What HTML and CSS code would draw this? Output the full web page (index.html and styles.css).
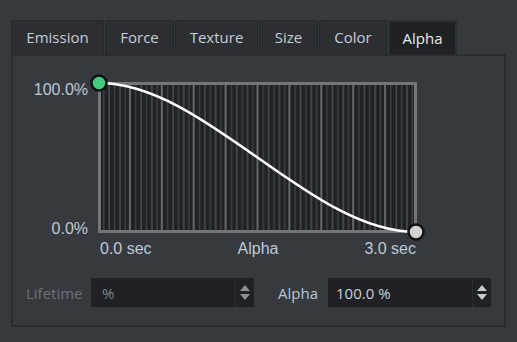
FILE: index.html
```html
<!DOCTYPE html>
<html lang="en">
<head>
    <meta charset="UTF-8">
    <title>Particle Alpha</title>
    <link rel="stylesheet" href="styles.css">
</head>
<body>
    <div class="editor">
        <!-- Abas -->
        <div class="tabs">
            <div class="tab tab-emission">Emission</div>
            <div class="tab tab-force">Force</div>
            <div class="tab tab-texture">Texture</div>
            <div class="tab tab-size">Size</div>
            <div class="tab tab-color">Color</div>
            <div class="tab tab-alpha ativa">Alpha</div>
        </div>

        <div class="panel">
            <!-- Grafico da curva -->
            <div class="chart-row">
                <div class="y-labels">
                    <span>100.0%</span>
                    <span>0.0%</span>
                </div>
                <svg class="plot" width="319" height="151" viewBox="0 0 319 151">
                    <defs>
                        <pattern id="minor" x="0" y="0" width="31.9" height="151" patternUnits="userSpaceOnUse">
                            <rect x="5" y="0" width="1.5" height="151" fill="#3d4044"/>
                            <rect x="10.5" y="0" width="1.5" height="151" fill="#4b4e52"/>
                            <rect x="15.8" y="0" width="1.5" height="151" fill="#3d4044"/>
                            <rect x="21.2" y="0" width="1.5" height="151" fill="#4b4e52"/>
                            <rect x="26.5" y="0" width="1.5" height="151" fill="#3d4044"/>
                        </pattern>
                        <pattern id="major" x="-1" y="0" width="31.9" height="151" patternUnits="userSpaceOnUse">
                            <rect x="0" y="0" width="2" height="151" fill="#65686b"/>
                        </pattern>
                    </defs>
                    <rect x="0" y="0" width="319" height="151" fill="#1f2124"/>
                    <rect x="0" y="0" width="319" height="151" fill="url(#minor)"/>
                    <rect x="0" y="0" width="319" height="151" fill="url(#major)"/>
                    <rect x="1.5" y="1.5" width="316" height="148" fill="none" stroke="#737578" stroke-width="3"/>
                    <path d="M1,1 C107,1 212,150 318,150" fill="none" stroke="#ffffff" stroke-width="2.5"/>
                    <circle cx="1" cy="1" r="7.5" fill="#3ecb7c" stroke="#111213" stroke-width="2.5"/>
                    <circle cx="318" cy="150" r="7.5" fill="#d3d3d3" stroke="#111213" stroke-width="2.5"/>
                </svg>
            </div>
            <div class="x-labels">
                <span>0.0 sec</span>
                <span>Alpha</span>
                <span>3.0 sec</span>
            </div>

            <!-- Campos -->
            <div class="fields">
                <div class="field">
                    <label class="field-label label-lifetime desativado">Lifetime</label>
                    <div class="spinbox desativado">
                        <span class="spin-value">%</span>
                        <span class="spin-arrows">
                            <span class="seta-cima"></span>
                            <span class="seta-baixo"></span>
                        </span>
                    </div>
                </div>
                <div class="field">
                    <label class="field-label label-alpha">Alpha</label>
                    <div class="spinbox">
                        <span class="spin-value">100.0 %</span>
                        <span class="spin-arrows">
                            <span class="seta-cima"></span>
                            <span class="seta-baixo"></span>
                        </span>
                    </div>
                </div>
            </div>
        </div>
    </div>
</body>
</html>
```

FILE: styles.css
```css
body {
    margin: 0;
    background-color: #36393e;
    font-family: "Open Sans", sans-serif;
    color: #c6cfd9;
}

.editor {
    padding: 20px 0 0 11px;
}

/* Abas */
.tabs {
    display: flex;
    height: 34px;
}

.tab {
    box-sizing: border-box;
    height: 34px;
    display: flex;
    align-items: center;
    justify-content: center;
    padding-bottom: 1px;
    background-color: #2c2e32;
    border: 1px solid #25272a;
    border-bottom: none;
    border-radius: 2px 2px 0 0;
    font-size: 15px;
    margin-right: 1px;
}

.tab-emission { width: 93px; }
.tab-force { width: 69px; }
.tab-texture { width: 83px; }
.tab-size { width: 59px; }
.tab-color { width: 68px; }
.tab-alpha { width: 69px; }

.tab.ativa {
    background-color: #1f2125;
    border: 2px solid #2b2e32;
    border-bottom: none;
    color: #e4eaf1;
}

.panel {
    box-sizing: border-box;
    width: 495px;
    height: 273px;
    border: 2px solid #2a2c30;
    padding-top: 26px;
}

/* Grafico */
.chart-row {
    display: flex;
}

.y-labels {
    width: 85px;
    box-sizing: border-box;
    padding-right: 10px;
    display: flex;
    flex-direction: column;
    justify-content: space-between;
    align-items: flex-end;
    font-family: "Liberation Sans", Arial, sans-serif;
    font-size: 16px;
    line-height: 16px;
    margin-bottom: -4px;
    color: #bcc9d6;
}

.plot {
    display: block;
    overflow: visible;
}

.x-labels {
    display: flex;
    justify-content: space-between;
    width: 316px;
    margin: 8px 0 0 87px;
    font-family: "Liberation Sans", Arial, sans-serif;
    font-size: 16px;
    line-height: 16px;
    color: #bcc9d6;
}

/* Campos */
.fields {
    display: flex;
    margin-top: 21px;
}

.field {
    display: flex;
    align-items: center;
}

.field-label {
    font-size: 15px;
    color: #b9c6d3;
}

.label-lifetime {
    width: 65px;
    padding-left: 13px;
}

.label-alpha {
    width: 50px;
    padding-left: 24px;
}

.field-label.desativado {
    color: #6c7076;
}

.spinbox {
    box-sizing: border-box;
    width: 163px;
    height: 29px;
    display: flex;
    background-color: #1f2124;
}

.spin-value {
    flex: 1;
    display: flex;
    align-items: center;
    padding-left: 8px;
    font-size: 15px;
    color: #c6d2de;
}

.spinbox.desativado .spin-value {
    padding-left: 11px;
    color: #7d8792;
}

.spin-arrows {
    width: 18px;
    border-left: 1px solid #2a2c30;
    display: flex;
    flex-direction: column;
    align-items: center;
    justify-content: center;
    gap: 3px;
}

.seta-cima {
    width: 0;
    height: 0;
    border-left: 5px solid transparent;
    border-right: 5px solid transparent;
    border-bottom: 6px solid #c7cbd0;
}

.seta-baixo {
    width: 0;
    height: 0;
    border-left: 5px solid transparent;
    border-right: 5px solid transparent;
    border-top: 6px solid #c7cbd0;
}

.spinbox.desativado .seta-cima { border-bottom-color: #8d9196; }
.spinbox.desativado .seta-baixo { border-top-color: #8d9196; }
```
